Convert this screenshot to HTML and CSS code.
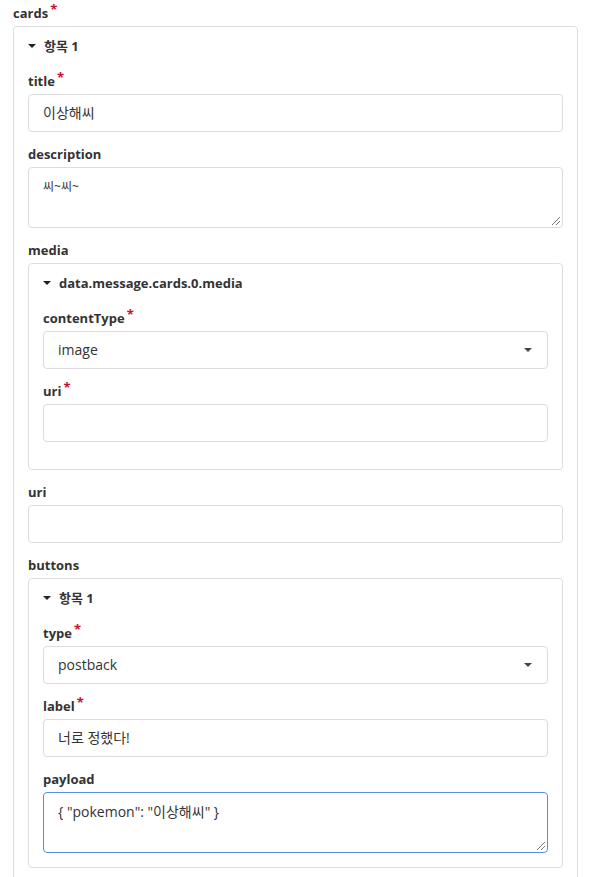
FILE: index.html
```html
<!DOCTYPE html>
<html lang="ko">
<head>
<meta charset="utf-8">
<link rel="stylesheet" href="styles.css">
</head>
<body>
<div class="page">
  <div class="label">cards<span class="req">*</span></div>
  <div class="card outer">
    <div class="card-head"><span class="caret"></span>항목 1</div>
    <div class="field">
      <div class="label">title<span class="req">*</span></div>
      <div class="input">이상해씨</div>
    </div>
    <div class="field">
      <div class="label">description</div>
      <div class="input textarea small">씨~씨~<span class="grip"></span></div>
    </div>
    <div class="field">
      <div class="label">media</div>
      <div class="card inner media">
        <div class="card-head"><span class="caret"></span>data.message.cards.0.media</div>
        <div class="field">
          <div class="label">contentType<span class="req">*</span></div>
          <div class="input select">image<span class="sel-caret"></span></div>
        </div>
        <div class="field last">
          <div class="label">uri<span class="req">*</span></div>
          <div class="input"></div>
        </div>
      </div>
    </div>
    <div class="field">
      <div class="label">uri</div>
      <div class="input"></div>
    </div>
    <div class="field">
      <div class="label">buttons</div>
      <div class="card inner">
        <div class="card-head"><span class="caret"></span>항목 1</div>
        <div class="field">
          <div class="label">type<span class="req">*</span></div>
          <div class="input select">postback<span class="sel-caret"></span></div>
        </div>
        <div class="field">
          <div class="label">label<span class="req">*</span></div>
          <div class="input">너로 정했다!</div>
        </div>
        <div class="field nomargin">
          <div class="label">payload</div>
          <div class="input textarea focus">{ "pokemon": "이상해씨" }<span class="grip"></span></div>
        </div>
      </div>
    </div>
  </div>
</div>
</body>
</html>
```
FILE: styles.css
```css
* { box-sizing: border-box; }
html, body { margin: 0; padding: 0; background: #fff; }
body {
  font-family: "Open Sans", "Noto Sans CJK KR", sans-serif;
  color: #333;
  width: 590px;
  height: 877px;
  overflow: hidden;
}
.page { padding: 3px 12px 0 13px; }
.label {
  font-size: 13px;
  font-weight: 700;
  line-height: 20px;
  height: 20px;
  color: #333;
  margin-bottom: 3px;
}
.req {
  position: relative;
  top: -4px;
  color: #c8102e;
  margin-left: 2px;
  font-size: 13px;
  line-height: 1;
}
.card {
  border: 1px solid #dedede;
  border-radius: 4px;
  padding: 9px 14px 14px;
}
.outer { height: 900px; }
.card-head {
  display: flex;
  align-items: center;
  font-size: 13px;
  font-weight: 700;
  line-height: 20px;
  height: 20px;
  margin-bottom: 15px;
}
.caret {
  width: 0; height: 0;
  border-left: 4px solid transparent;
  border-right: 4px solid transparent;
  border-top: 4px solid #222;
  margin: 0 8px 0 0;
}
.field { margin-bottom: 12px; }
.field.last { margin-bottom: 13px; }
.field.nomargin { margin-bottom: 0; }
.input {
  position: relative;
  height: 38px;
  border: 1px solid #dcdcdc;
  border-radius: 4px;
  padding: 0 14px;
  font-size: 14px;
  line-height: 36px;
  color: #333;
}
.textarea { height: 61px; line-height: 20px; padding-top: 9px; }
.textarea.small { font-size: 12px; }
.textarea.focus { border-color: #5b8be8; }
.grip {
  position: absolute;
  right: 2px; bottom: 2px;
  width: 8px; height: 8px;
  background: linear-gradient(135deg, transparent 45%, #777 45%, #777 55%, transparent 55%, transparent 70%, #777 70%, #777 80%, transparent 80%);
}
.select { display: flex; align-items: center; justify-content: space-between; }
.sel-caret {
  width: 0; height: 0;
  border-left: 4px solid transparent;
  border-right: 4px solid transparent;
  border-top: 4px solid #444;
  margin-right: 1px;
}
```
